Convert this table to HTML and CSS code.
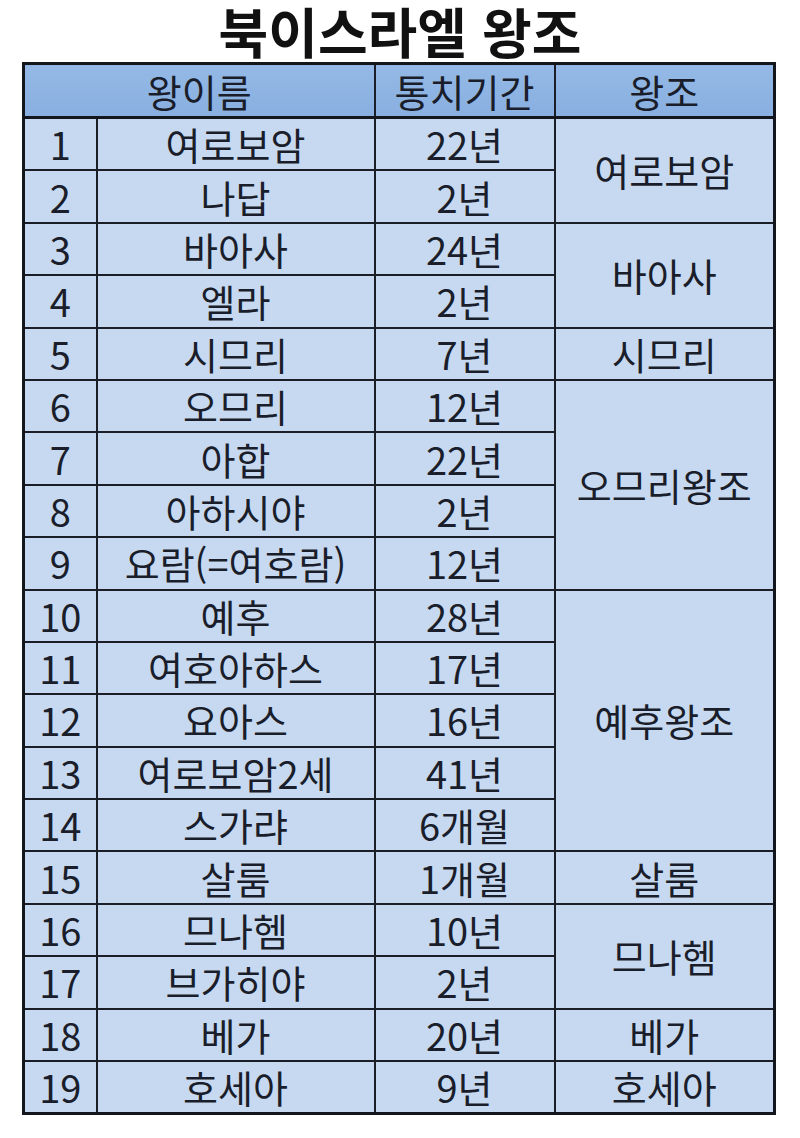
FILE: index.html
```html
<!DOCTYPE html>
<html lang="ko">
<head>
<meta charset="utf-8">
<link rel="stylesheet" href="styles.css">
</head>
<body>
<div class="page">
  <h1 class="title">북이스라엘 왕조</h1>
  <table class="kings">
    <colgroup>
      <col class="c-num"><col class="c-name"><col class="c-period"><col class="c-dyn">
    </colgroup>
    <thead>
      <tr><th colspan="2">왕이름</th><th>통치기간</th><th>왕조</th></tr>
    </thead>
    <tbody>
      <tr><td>1</td><td>여로보암</td><td>22년</td><td rowspan="2">여로보암</td></tr>
      <tr><td>2</td><td>나답</td><td>2년</td></tr>
      <tr><td>3</td><td>바아사</td><td>24년</td><td rowspan="2">바아사</td></tr>
      <tr><td>4</td><td>엘라</td><td>2년</td></tr>
      <tr><td>5</td><td>시므리</td><td>7년</td><td>시므리</td></tr>
      <tr><td>6</td><td>오므리</td><td>12년</td><td rowspan="4">오므리왕조</td></tr>
      <tr><td>7</td><td>아합</td><td>22년</td></tr>
      <tr><td>8</td><td>아하시야</td><td>2년</td></tr>
      <tr><td>9</td><td>요람(=여호람)</td><td>12년</td></tr>
      <tr><td>10</td><td>예후</td><td>28년</td><td rowspan="5">예후왕조</td></tr>
      <tr><td>11</td><td>여호아하스</td><td>17년</td></tr>
      <tr><td>12</td><td>요아스</td><td>16년</td></tr>
      <tr><td>13</td><td>여로보암2세</td><td>41년</td></tr>
      <tr><td>14</td><td>스가랴</td><td>6개월</td></tr>
      <tr><td>15</td><td>살룸</td><td>1개월</td><td>살룸</td></tr>
      <tr><td>16</td><td>므나헴</td><td>10년</td><td rowspan="2">므나헴</td></tr>
      <tr><td>17</td><td>브가히야</td><td>2년</td></tr>
      <tr><td>18</td><td>베가</td><td>20년</td><td>베가</td></tr>
      <tr><td>19</td><td>호세아</td><td>9년</td><td>호세아</td></tr>
    </tbody>
  </table>
</div>
</body>
</html>
```
FILE: styles.css
```css
html, body {
  margin: 0;
  padding: 0;
  background: #ffffff;
}

.page {
  width: 800px;
  height: 1138px;
  font-family: "Noto Sans CJK KR", "Noto Sans", sans-serif;
  color: #1a1d2a;
}

.title {
  margin: 0;
  padding: 4px 0;
  height: 54px;
  line-height: 54px;
  text-align: center;
  font-size: 54px;
  font-weight: 700;
  color: #111111;
}

.kings {
  margin-left: 22px;
  width: 751px;
  border-collapse: collapse;
  table-layout: fixed;
  border: 3px solid #14161d;
}

.c-num { width: 73px; }
.c-name { width: 278px; }
.c-period { width: 180px; }
.c-dyn { width: 220px; }

.kings th,
.kings td {
  padding: 0;
  text-align: center;
  vertical-align: middle;
  font-size: 38px;
  font-weight: 400;
  line-height: 1;
  border: 2px solid #1b1e27;
}

.kings th {
  height: 51px;
  background: linear-gradient(#94b9e6, #88afe0);
  border-bottom: 3px solid #14161d;
}

.kings td {
  height: 50.4px;
  background: #c6d9f1;
}
```
